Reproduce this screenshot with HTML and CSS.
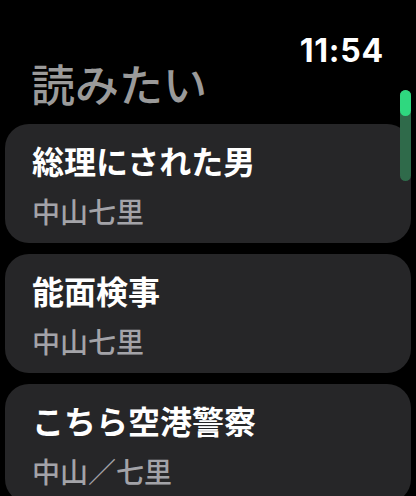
FILE: index.html
```html
<!DOCTYPE html>
<html lang="ja">
<head>
<meta charset="utf-8">
<link rel="stylesheet" href="styles.css">
</head>
<body>
<div class="screen">
  <header class="header">
    <div class="time">11:54</div>
    <h1 class="title">読みたい</h1>
  </header>
  <div class="list">
    <div class="card">
      <div class="book">総理にされた男</div>
      <div class="author">中山七里</div>
    </div>
    <div class="card">
      <div class="book">能面検事</div>
      <div class="author">中山七里</div>
    </div>
    <div class="card">
      <div class="book">こちら空港警察</div>
      <div class="author">中山／七里</div>
    </div>
  </div>
  <div class="scrollbar"><div class="thumb"></div></div>
</div>
</body>
</html>
```
FILE: styles.css
```css
html, body {
  margin: 0;
  padding: 0;
  background: #000;
}
.screen {
  position: relative;
  width: 416px;
  height: 496px;
  overflow: hidden;
  background: #000;
  font-family: "Noto Sans CJK JP", "Inter", sans-serif;
}
.header {
  display: flex;
  flex-direction: column;
  padding-top: 33px;
}
.time {
  align-self: flex-end;
  padding-right: 32px;
  font-family: "Inter", "Liberation Sans", sans-serif;
  font-weight: 700;
  font-size: 32px;
  line-height: 36px;
  color: #fff;
  letter-spacing: 0.8px;
}
.title {
  margin: 0;
  padding-left: 31px;
  font-size: 44px;
  font-weight: 500;
  line-height: 28px;
  color: #9a9a9a;
}
.list {
  display: flex;
  flex-direction: column;
  gap: 11px;
  padding: 27px 5px 0 5px;
}
.card {
  background: #262628;
  border-radius: 24px;
  height: 119px;
  box-sizing: border-box;
  padding: 14px 0 0 27px;
  flex-shrink: 0;
}
.book {
  font-size: 32px;
  font-weight: 700;
  line-height: 44px;
  color: #fff;
}
.author {
  margin-top: 11px;
  font-size: 28px;
  font-weight: 500;
  line-height: 36px;
  color: #a3a3a8;
}
.scrollbar {
  position: absolute;
  left: 400px;
  top: 90px;
  width: 11px;
  height: 91px;
  border-radius: 6px;
  background: #2f6a4a;
}
.thumb {
  width: 11px;
  height: 26px;
  border-radius: 6px;
  background: #2fd87f;
}
```
